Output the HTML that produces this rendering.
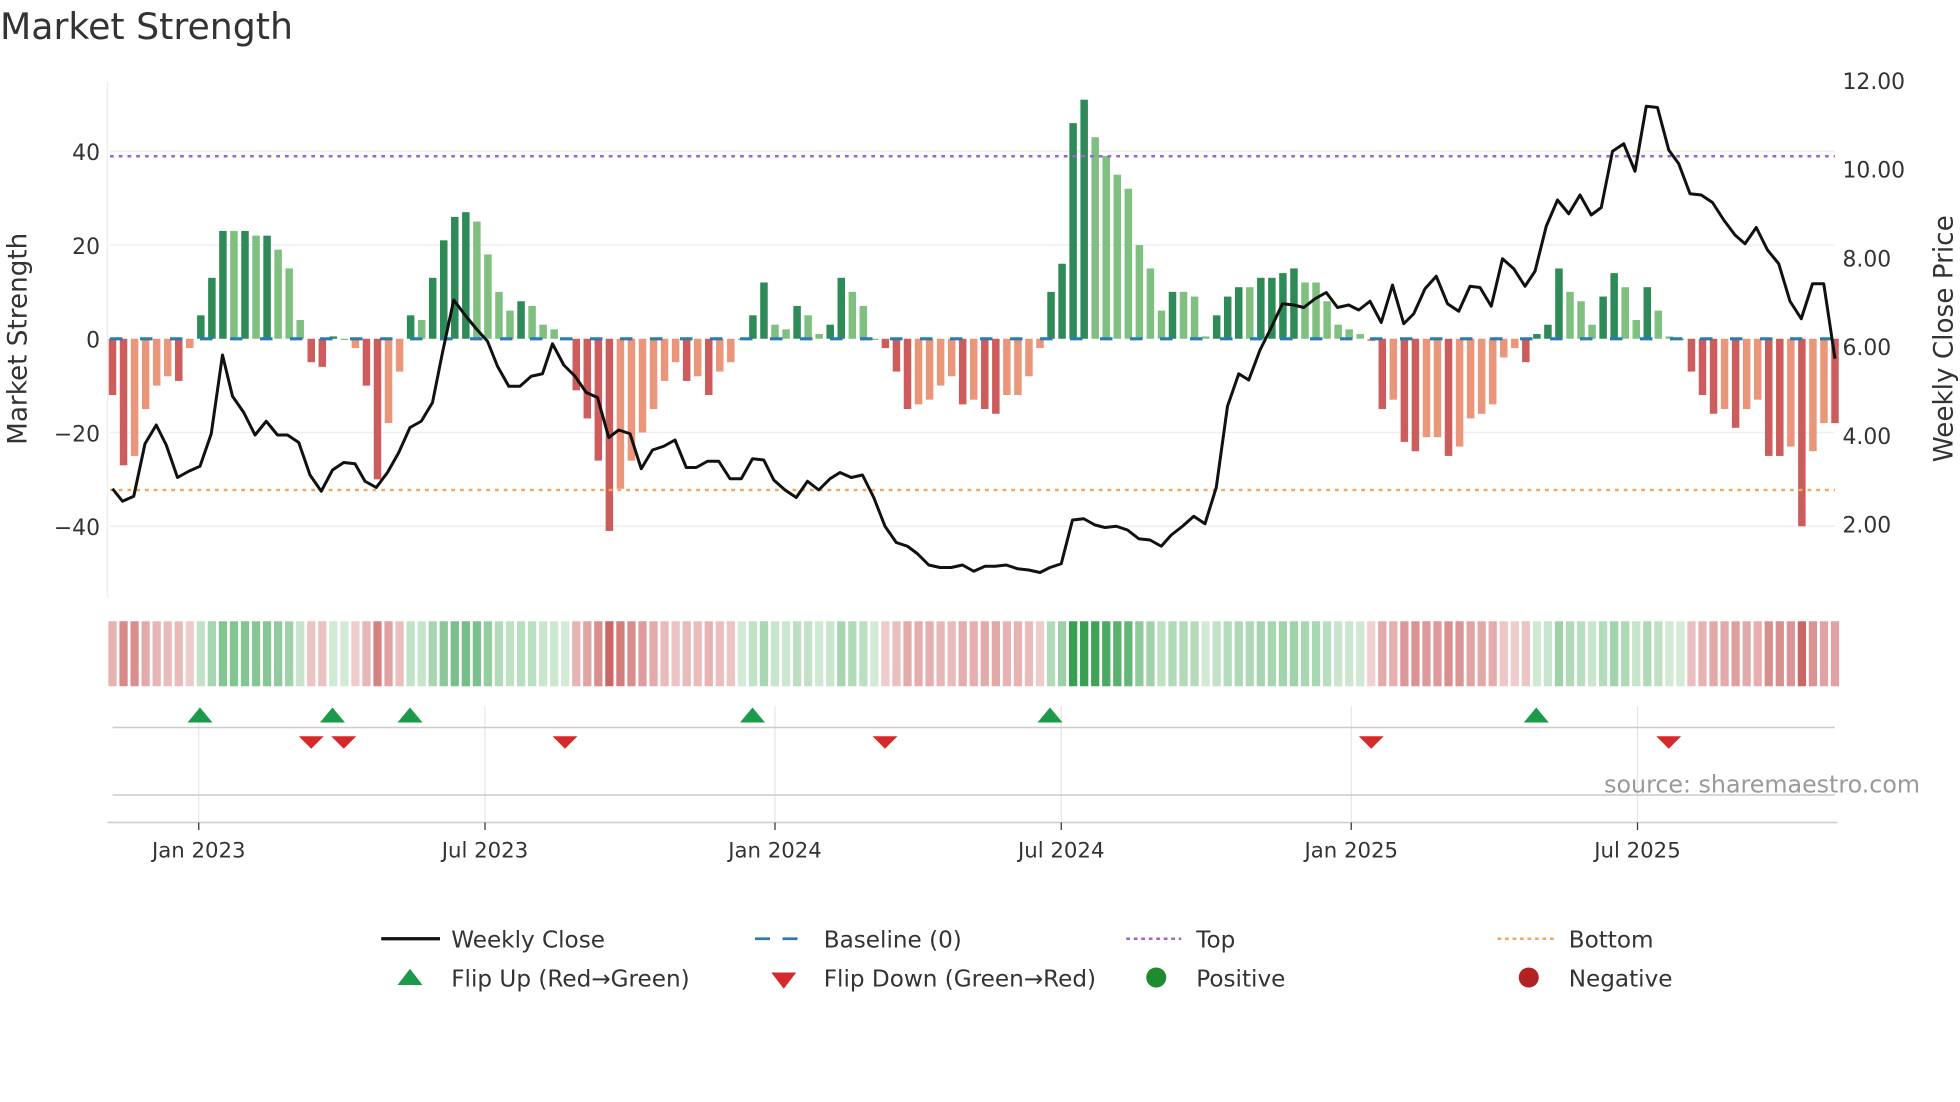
<!DOCTYPE html>
<html><head><meta charset="utf-8"><style>
html,body{margin:0;padding:0;background:#fff;}
svg{display:block;font-family:"DejaVu Sans","Liberation Sans",sans-serif;}
</style></head><body>
<svg id="s" width="1960" height="1102" viewBox="0 0 1568 881.6" xmlns="http://www.w3.org/2000/svg">
<rect width="1568" height="882" fill="#fff"/>
<text x="0" y="31" font-size="29" fill="#333">Market Strength</text>
<g stroke="#efefef" stroke-width="1.2">
<line x1="88" x2="1468" y1="121" y2="121"/><line x1="88" x2="1468" y1="196" y2="196"/>
<line x1="88" x2="1468" y1="346" y2="346"/><line x1="88" x2="1468" y1="421" y2="421"/>
<line x1="86" x2="86" y1="65" y2="478"/>
</g>
<g font-size="17.5" fill="#333" text-anchor="end">
<text x="80" y="128">40</text><text x="80" y="203">20</text><text x="80" y="278">0</text>
<text x="80" y="353">−20</text><text x="80" y="428">−40</text>
</g>
<g font-size="17.5" fill="#333">
<text x="1474" y="71">12.00</text><text x="1474" y="142">10.00</text><text x="1474" y="213">8.00</text>
<text x="1474" y="284">6.00</text><text x="1474" y="355">4.00</text><text x="1474" y="426">2.00</text>
</g>
<text transform="translate(21,271) rotate(-90)" font-size="21" fill="#333" text-anchor="middle">Market Strength</text>
<text transform="translate(1562,271) rotate(-90)" font-size="21" fill="#333" text-anchor="middle">Weekly Close Price</text>
<g id="bars"></g>
<line x1="88" x2="1468" y1="271" y2="271" stroke="#2c7bb0" stroke-width="2.5" stroke-dasharray="10,14"/>
<line x1="88" x2="1468" y1="125" y2="125" stroke="#9a66cc" stroke-width="2" stroke-dasharray="3,4"/>
<line x1="88" x2="1468" y1="392" y2="392" stroke="#f0a860" stroke-width="2" stroke-dasharray="3,4"/>
<polyline id="price" fill="none" stroke="#111" stroke-width="2.4" stroke-linejoin="round"/>
<g id="heat"></g>
<g stroke="#e6e6e6" stroke-width="1">
<line x1="159" x2="159" y1="565" y2="658"/><line x1="388" x2="388" y1="565" y2="658"/>
<line x1="620" x2="620" y1="565" y2="658"/><line x1="849" x2="849" y1="565" y2="658"/>
<line x1="1081" x2="1081" y1="565" y2="658"/><line x1="1310" x2="1310" y1="565" y2="658"/>
</g>
<line x1="90" x2="1468" y1="582" y2="582" stroke="#ccc" stroke-width="1.2"/>
<line x1="90" x2="1468" y1="636" y2="636" stroke="#ccc" stroke-width="1.2"/>
<line x1="86" x2="1470" y1="658" y2="658" stroke="#ccc" stroke-width="1.2"/>
<g id="flips"></g>
<text x="1536" y="634" font-size="19" fill="#999" text-anchor="end">source: sharemaestro.com</text>
<g font-size="17" fill="#333" text-anchor="middle">
<line x1="159" x2="159" y1="658" y2="664" stroke="#333"/><text x="159" y="686">Jan 2023</text>
<line x1="388" x2="388" y1="658" y2="664" stroke="#333"/><text x="388" y="686">Jul 2023</text>
<line x1="620" x2="620" y1="658" y2="664" stroke="#333"/><text x="620" y="686">Jan 2024</text>
<line x1="849" x2="849" y1="658" y2="664" stroke="#333"/><text x="849" y="686">Jul 2024</text>
<line x1="1081" x2="1081" y1="658" y2="664" stroke="#333"/><text x="1081" y="686">Jan 2025</text>
<line x1="1310" x2="1310" y1="658" y2="664" stroke="#333"/><text x="1310" y="686">Jul 2025</text>
</g>
<g font-size="18.5" fill="#333">
<line x1="305" x2="352" y1="751" y2="751" stroke="#111" stroke-width="2.6"/>
<text x="361" y="758">Weekly Close</text>
<line x1="604" x2="648" y1="751" y2="751" stroke="#2c7bb0" stroke-width="2.2" stroke-dasharray="12,10"/>
<text x="659" y="758">Baseline (0)</text>
<line x1="901" x2="945" y1="751" y2="751" stroke="#9a66cc" stroke-width="2" stroke-dasharray="3,3"/>
<text x="957" y="758">Top</text>
<line x1="1198" x2="1243" y1="751" y2="751" stroke="#f0a860" stroke-width="2" stroke-dasharray="3,3"/>
<text x="1255" y="758">Bottom</text>
<polygon points="318,788 338,788 328,775" fill="#1a9a4a"/>
<text x="361" y="789">Flip Up (Red→Green)</text>
<polygon points="617,778 637,778 627,791" fill="#d62a2a"/>
<text x="659" y="789">Flip Down (Green→Red)</text>
<circle cx="925" cy="782" r="8" fill="#1e8c2e"/>
<text x="957" y="789">Positive</text>
<circle cx="1223" cy="782" r="8" fill="#b22222"/>
<text x="1255" y="789">Negative</text>
</g>
</svg>
<script>
var V=[[-12,1],[-27,1],[-25,0],[-15,0],[-10,0],[-8,0],[-9,1],[-2,0],[5,1],[13,1],[23,1],[23,0],[23,1],[22,0],[22,1],[19,0],[15,0],[4,0],[-5,1],[-6,1],[0.5,1],[0,0],[-2,0],[-10,1],[-30,1],[-18,0],[-7,0],[5,1],[4,0],[13,1],[21,1],[26,1],[27,1],[25,0],[18,0],[10,0],[6,0],[8,1],[7,0],[3,0],[2,0],[0,0],[-11,1],[-17,1],[-26,1],[-41,1],[-32,0],[-26,0],[-20,0],[-15,0],[-9,0],[-5,0],[-9,1],[-8,0],[-12,1],[-7,0],[-5,0],[0,0],[5,1],[12,1],[3,0],[2,0],[7,1],[5,0],[1,0],[3,1],[13,1],[10,0],[7,0],[0,0],[-2,1],[-7,1],[-15,1],[-14,0],[-13,0],[-10,0],[-8,0],[-14,1],[-13,0],[-15,1],[-16,1],[-12,0],[-12,0],[-8,0],[-2,0],[10,1],[16,1],[46,1],[51,1],[43,0],[39,0],[35,0],[32,0],[20,0],[15,0],[6,0],[10,1],[10,0],[9,0],[0.5,0],[5,1],[9,1],[11,1],[11,0],[13,1],[13,1],[14,1],[15,1],[12,0],[12,0],[8,0],[3,0],[2,0],[1,0],[-0.5,0],[-15,1],[-13,0],[-22,1],[-24,1],[-21,0],[-21,0],[-25,1],[-23,0],[-17,0],[-16,0],[-14,0],[-4,0],[-2,0],[-5,1],[1,1],[3,1],[15,1],[10,0],[8,0],[3,0],[9,1],[14,1],[11,0],[4,0],[11,1],[6,0],[0.5,0],[0,0],[-7,1],[-12,1],[-16,1],[-15,0],[-19,1],[-15,0],[-13,0],[-25,1],[-25,1],[-23,0],[-40,1],[-24,0],[-18,0],[-18,1]];
var P="90,391 98,401 107,397 116,355 125,340 133,356 142,382 151,377 160,373 169,347 178,284 186,317 195,330 204,348 213,337 222,348 230,348 239,354 248,380 257,393 266,376 275,370 284,371 292,385 301,390 310,378 319,362 328,342 337,337 346,322 354,282 363,240 372,252 381,263 390,273 398,293 407,309 416,309 425,301 434,299 442,275 451,292 460,301 469,314 478,318 487,350 495,344 504,347 513,375 522,360 531,357 540,352 549,374 557,374 566,369 575,369 584,383 593,383 602,367 611,368 619,384 628,392 637,398 646,385 655,392 664,383 672,378 681,382 690,380 699,398 708,421 717,434 726,437 734,443 743,452 752,454 761,454 770,452 779,457 788,453 796,453 805,452 814,455 823,456 832,458 840,454 849,451 858,416 867,415 876,420 884,422 893,421 902,424 911,431 920,432 929,437 937,428 946,421 955,413 964,419 973,390 982,325 991,299 999,304 1008,280 1017,262 1026,243 1035,244 1043,246 1052,239 1061,234 1070,246 1079,244 1087,248 1096,241 1105,258 1114,228 1123,259 1131,251 1140,231 1149,221 1158,243 1167,249 1176,229 1184,230 1193,245 1202,207 1211,215 1220,229 1228,217 1237,181 1246,160 1255,171 1264,156 1273,172 1281,166 1290,121 1299,115 1308,137 1317,85 1326,86 1335,120 1343,131 1352,155 1361,156 1370,162 1379,176 1388,188 1396,195 1405,182 1414,200 1423,211 1432,241 1441,255 1450,227 1459,227 1468,287";
document.getElementById('price').setAttribute('points',P);
var ns="http://www.w3.org/2000/svg",b=document.getElementById('bars'),h=document.getElementById('heat');
function mix(a,c,t){var r=[];for(var i=0;i<3;i++)r.push(Math.round(a[i]+(c[i]-a[i])*t));return 'rgb('+r.join(',')+')';}
var n=V.length,step=(1468-90)/(n-1);
for(var i=0;i<n;i++){var v=V[i][0],d=V[i][1],x=90+i*step;
 var r=document.createElementNS(ns,'rect');var y0=271,y1=271-v*3.75;
 r.setAttribute('x',x-3);r.setAttribute('width',6);r.setAttribute('y',Math.min(y0,y1));r.setAttribute('height',Math.max(Math.abs(y1-y0),1));
 r.setAttribute('fill',v>=0?(d?'#2e8b57':'#7fbf7f'):(d?'#cd5c5c':'#e9967a'));b.appendChild(r);
 var c=document.createElementNS(ns,'rect');c.setAttribute('x',x-3.3);c.setAttribute('width',6.6);c.setAttribute('y',497);c.setAttribute('height',52);
 var t=Math.min(Math.abs(v)/45,1);t=0.12+0.88*t;
 c.setAttribute('fill',v>=0?mix([232,245,232],[55,160,80],t):mix([246,226,226],[200,90,90],t));h.appendChild(c);}
var f=document.getElementById('flips');
[160,266,328,602,840,1229].forEach(function(x){var p=document.createElementNS(ns,'polygon');p.setAttribute('points',(x-10)+',578 '+(x+10)+',578 '+x+',566');p.setAttribute('fill','#1a9a4a');f.appendChild(p);});
[249,275,452,708,1097,1335].forEach(function(x){var p=document.createElementNS(ns,'polygon');p.setAttribute('points',(x-10)+',589 '+(x+10)+',589 '+x+',599');p.setAttribute('fill','#d62a2a');f.appendChild(p);});
</script>
</body></html>
